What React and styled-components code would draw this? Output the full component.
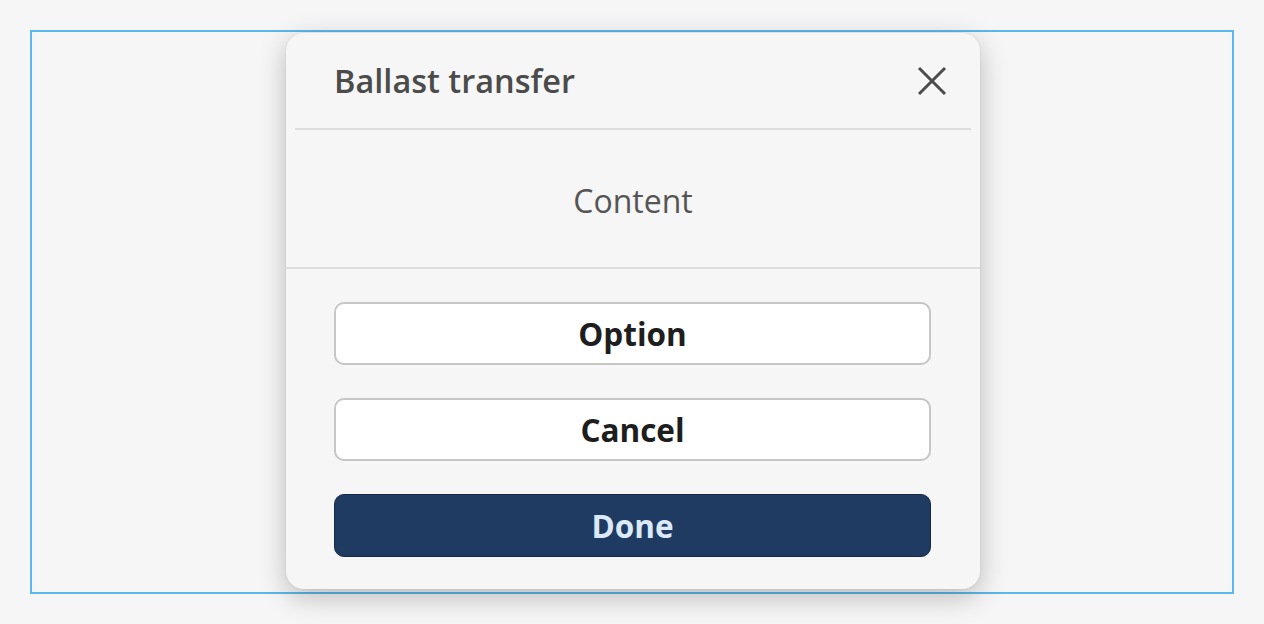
import React from "react";
import styled, { createGlobalStyle } from "styled-components";

const Global = createGlobalStyle`
  html, body { margin: 0; padding: 0; background: #f6f6f6; }
  body { font-family: "Open Sans", "Noto Sans", sans-serif; }
  * { box-sizing: border-box; }
`;

const Frame = styled.div`
  margin: 30px;
  width: 1204px;
  height: 564px;
  padding-left: 2px;
  border: 2px solid #5ab8eb;
  display: flex;
  justify-content: center;
  align-items: center;
`;

const Modal = styled.div`
  width: 694px;
  height: 556px;
  margin-top: -2px;
  background: #f6f6f6;
  border-radius: 18px;
  box-shadow: 0 8px 28px rgba(0, 0, 0, 0.24), 0 0 3px rgba(0, 0, 0, 0.08);
  display: flex;
  flex-direction: column;
  overflow: hidden;
`;

const Header = styled.div`
  height: 95px;
  padding: 0 32px 0 48px;
  display: flex;
  align-items: center;
  justify-content: space-between;
`;

const Title = styled.h2`
  margin: 0;
  font-size: 32.5px;
  font-weight: 600;
  color: #4b4b4b;
`;

const CloseButton = styled.button`
  border: 0;
  background: none;
  padding: 0;
  width: 32px;
  height: 32px;
  display: flex;
  align-items: center;
  justify-content: center;
  cursor: pointer;
`;

const Divider = styled.div`
  height: 2px;
  background: #dedede;
  margin: 0 ${(p) => p.$inset || 0}px;
  flex-shrink: 0;
`;

const Body = styled.div`
  height: 137px;
  padding-top: 4px;
  display: flex;
  align-items: center;
  justify-content: center;
  font-size: 32px;
  color: #555555;
`;

const Footer = styled.div`
  flex: 1;
  padding: 33px 49px 0 48px;
  display: flex;
  flex-direction: column;
  gap: 33px;
`;

const Button = styled.button`
  height: 63px;
  border-radius: 10px;
  font-family: inherit;
  font-size: 31.5px;
  font-weight: 700;
  cursor: pointer;
  border: ${(p) => (p.$primary ? "1px solid #142a47" : "2px solid #c6c6c6")};
  background: ${(p) => (p.$primary ? "#1f3b62" : "#ffffff")};
  color: ${(p) => (p.$primary ? "#dbe9f8" : "#1e1e1e")};
`;

export default function App() {
  return (
    <>
      <Global />
      <Frame>
        <Modal>
          <Header>
            <Title>Ballast transfer</Title>
            <CloseButton aria-label="Close">
              <svg width="30" height="30" viewBox="0 0 30 30">
                <path d="M2 2 L28 28 M28 2 L2 28" stroke="#4b4b4b" strokeWidth="3" strokeLinecap="butt" />
              </svg>
            </CloseButton>
          </Header>
          <Divider $inset={9} />
          <Body>Content</Body>
          <Divider />
          <Footer>
            <Button>Option</Button>
            <Button>Cancel</Button>
            <Button $primary>Done</Button>
          </Footer>
        </Modal>
      </Frame>
    </>
  );
}
